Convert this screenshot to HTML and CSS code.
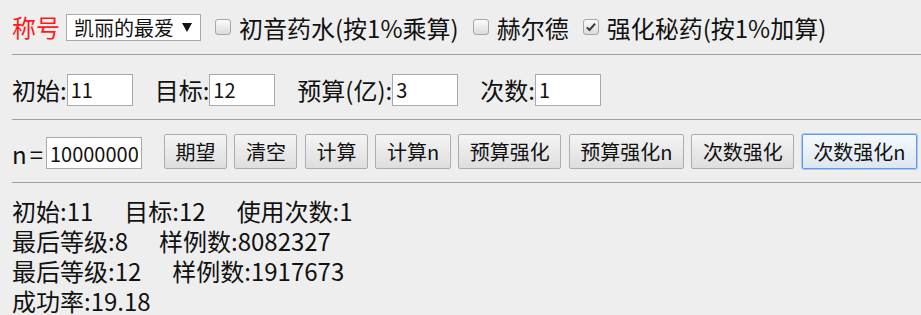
FILE: index.html
```html
<!DOCTYPE html>
<html lang="zh-CN">
<head>
<meta charset="utf-8">
<title>强化模拟</title>
<link rel="stylesheet" href="styles.css">
</head>
<body>
<div class="page">
  <div class="row row-title">
    <span class="title-label">称号</span>
    <span class="select-wrap">
      <select class="select"><option>凯丽的最爱</option></select>
    </span>
    <label class="check"><span class="box"></span><span>初音药水(按1%乘算)</span></label>
    <label class="check"><span class="box"></span><span>赫尔德</span></label>
    <label class="check"><span class="box checked"><svg viewBox="0 0 16 16" width="12" height="12"><path d="M2.5 8.5 L6 12 L13.5 3.5" fill="none" stroke="#3a3a3a" stroke-width="2.8"/></svg></span><span>强化秘药(按1%加算)</span></label>
  </div>
  <hr class="rule">
  <div class="row row-params">
    <span class="field"><span class="flabel">初始:</span><input class="num" value="11"></span>
    <span class="field"><span class="flabel">目标:</span><input class="num" value="12"></span>
    <span class="field"><span class="flabel">预算(亿):</span><input class="num" value="3"></span>
    <span class="field"><span class="flabel">次数:</span><input class="num" value="1"></span>
  </div>
  <hr class="rule">
  <div class="row row-actions">
    <span class="field n-field"><span class="nlabel">n=</span><input class="num wide" value="10000000"></span>
    <div class="buttons">
      <button class="btn">期望</button>
      <button class="btn">清空</button>
      <button class="btn">计算</button>
      <button class="btn">计算n</button>
      <button class="btn">预算强化</button>
      <button class="btn">预算强化n</button>
      <button class="btn">次数强化</button>
      <button class="btn focus">次数强化n</button>
    </div>
  </div>
  <hr class="rule">
  <div class="output">
    <div class="line"><span class="item">初始:11</span><span class="item">目标:12</span><span>使用次数:1</span></div>
    <div class="line"><span class="item">最后等级:8</span><span>样例数:8082327</span></div>
    <div class="line"><span class="item">最后等级:12</span><span>样例数:1917673</span></div>
    <div class="line"><span>成功率:19.18</span></div>
  </div>
</div>
</body>
</html>
```

FILE: styles.css
```css
html, body {
  margin: 0;
  padding: 0;
  background: #eeeeee;
}
body {
  font-family: "Noto Sans CJK SC", "Noto Sans", sans-serif;
  font-size: 24px;
  color: #111;
  overflow: hidden;
}
.page {
  padding: 7px 0 0 12px;
}
.row {
  display: flex;
  align-items: center;
  white-space: nowrap;
}
.row-title {
  height: 40px;
  margin-bottom: 7px;
}
.title-label {
  color: #ff1a1a;
  margin-right: 6px;
  line-height: 1;
}
.select-wrap {
  position: relative;
  display: inline-block;
  margin-right: 14px;
}
.select {
  appearance: none;
  -webkit-appearance: none;
  width: 135px;
  height: 27px;
  border: 1px solid #a9a9a9;
  border-radius: 0;
  background: #fff;
  font-family: inherit;
  font-size: 20px;
  line-height: 25px;
  padding: 0 0 0 7px;
  color: #111;
  display: block;
}
.select-wrap::after {
  content: "";
  position: absolute;
  right: 9px;
  top: 9px;
  border-left: 5px solid transparent;
  border-right: 5px solid transparent;
  border-top: 9px solid #111;
  pointer-events: none;
}
.check {
  display: inline-flex;
  align-items: center;
  margin-right: 14px;
}
.box {
  width: 16px;
  height: 16px;
  box-sizing: border-box;
  border: 1px solid #a6a6a6;
  border-radius: 3px;
  background: linear-gradient(#fbfbfb, #dcdcdc);
  margin-right: 8px;
  display: inline-flex;
  align-items: center;
  justify-content: center;
}
.row-params {
  padding: 17px 0 12px;
}
.field {
  display: inline-flex;
  align-items: center;
  margin-right: 22px;
}
.num {
  width: 66px;
  height: 32px;
  box-sizing: border-box;
  border: 1px solid #a9a9a9;
  background: #fff;
  font-family: inherit;
  font-size: 20px;
  padding: 0 3px;
  color: #111;
  outline: none;
  margin: 0;
}
.wide {
  width: 96px;
}
.row-actions {
  padding: 14px 0 13px;
  align-items: flex-end;
}
.n-field {
  height: 32px;
}
.nlabel {
  letter-spacing: 3px;
}
.buttons {
  display: flex;
  gap: 7.5px;
}
.btn {
  height: 35px;
  box-sizing: border-box;
  padding: 0 10.5px;
  margin: 0;
  border: 1px solid #acacac;
  border-radius: 2px;
  background: linear-gradient(#f4f4f4, #dedede);
  font-family: inherit;
  font-size: 20px;
  color: #111;
  line-height: 1;
}
.btn.focus {
  border-color: #5a9bea;
  box-shadow: 0 0 0 1px rgba(90, 155, 234, 0.45);
  background: linear-gradient(#f5f9fd, #dde6f0);
}
.rule {
  border: 0;
  border-top: 1px solid #a0a0a0;
  margin: 0;
  height: 0;
}
.output {
  padding-top: 13px;
  line-height: 30px;
}
.line {
  white-space: nowrap;
}
.item {
  margin-right: 31px;
}
```
